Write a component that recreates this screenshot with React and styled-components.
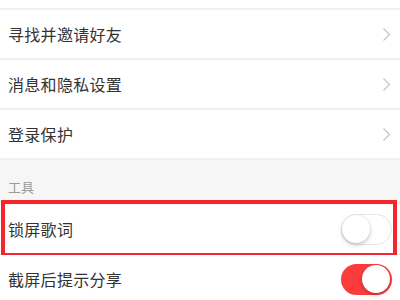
import React from "react";
import styled, { createGlobalStyle } from "styled-components";

const GlobalStyle = createGlobalStyle`
  html, body {
    margin: 0;
    padding: 0;
    background: #ffffff;
  }
  body {
    width: 400px;
    height: 300px;
    overflow: hidden;
    font-family: "Noto Sans CJK SC", "Noto Sans", sans-serif;
  }
`;

const List = styled.div`
  display: flex;
  flex-direction: column;
  background: #fff;
`;

const TopStub = styled.div`
  height: 8px;
  border-bottom: 2px solid #f0f0f0;
`;

const Row = styled.div`
  position: relative;
  height: 48px;
  display: flex;
  align-items: center;
  justify-content: space-between;
  padding: 0 9px 0 8px;
  border-bottom: 2px solid #f0f0f0;
  background: #fff;
`;

const Label = styled.span`
  font-size: 16px;
  color: #333;
  letter-spacing: 0.3px;
`;

const SectionHeader = styled.div`
  height: 45px;
  box-sizing: border-box;
  background: #f6f6f6;
  display: flex;
  align-items: flex-end;
  padding: 0 0 9px 8px;
  font-size: 13px;
  color: #9a9a9a;
`;

const Highlight = styled.div`
  position: absolute;
  top: -5px;
  bottom: -4px;
  left: 1px;
  right: 3px;
  border: 4px solid #f4262b;
  pointer-events: none;
`;

const Switch = styled.div`
  position: relative;
  width: 51px;
  height: 31px;
  box-sizing: border-box;
  border-radius: 16px;
  background: ${p => (p.on ? "#fb3c3e" : "#fff")};
  border: ${p => (p.on ? "none" : "1.5px solid #e6e6e6")};
  margin-right: -1px;
`;

const Knob = styled.div`
  position: absolute;
  top: ${p => (p.on ? "1.5px" : "0")};
  left: ${p => (p.on ? "21px" : "0")};
  width: 28px;
  height: 28px;
  border-radius: 50%;
  background: #fff;
  box-shadow: 0 2px 4px rgba(0, 0, 0, 0.22), 0 0 1px rgba(0, 0, 0, 0.15);
`;

const Chevron = () => (
  <svg width="9" height="15" viewBox="0 0 9 15">
    <path d="M1.5 1.5 L7.5 7.5 L1.5 13.5" fill="none" stroke="#c8c8c8" strokeWidth="1.3" />
  </svg>
);

const Toggle = ({ on }) => (
  <Switch on={on ? 1 : 0}>
    <Knob on={on ? 1 : 0} />
  </Switch>
);

export default function App() {
  return (
    <>
      <GlobalStyle />
      <List>
        <TopStub />
        <Row>
          <Label>寻找并邀请好友</Label>
          <Chevron />
        </Row>
        <Row>
          <Label>消息和隐私设置</Label>
          <Chevron />
        </Row>
        <Row>
          <Label>登录保护</Label>
          <Chevron />
        </Row>
        <SectionHeader>工具</SectionHeader>
        <Row>
          <Label>锁屏歌词</Label>
          <Toggle on={false} />
          <Highlight />
        </Row>
        <Row>
          <Label>截屏后提示分享</Label>
          <Toggle on />
        </Row>
      </List>
    </>
  );
}
